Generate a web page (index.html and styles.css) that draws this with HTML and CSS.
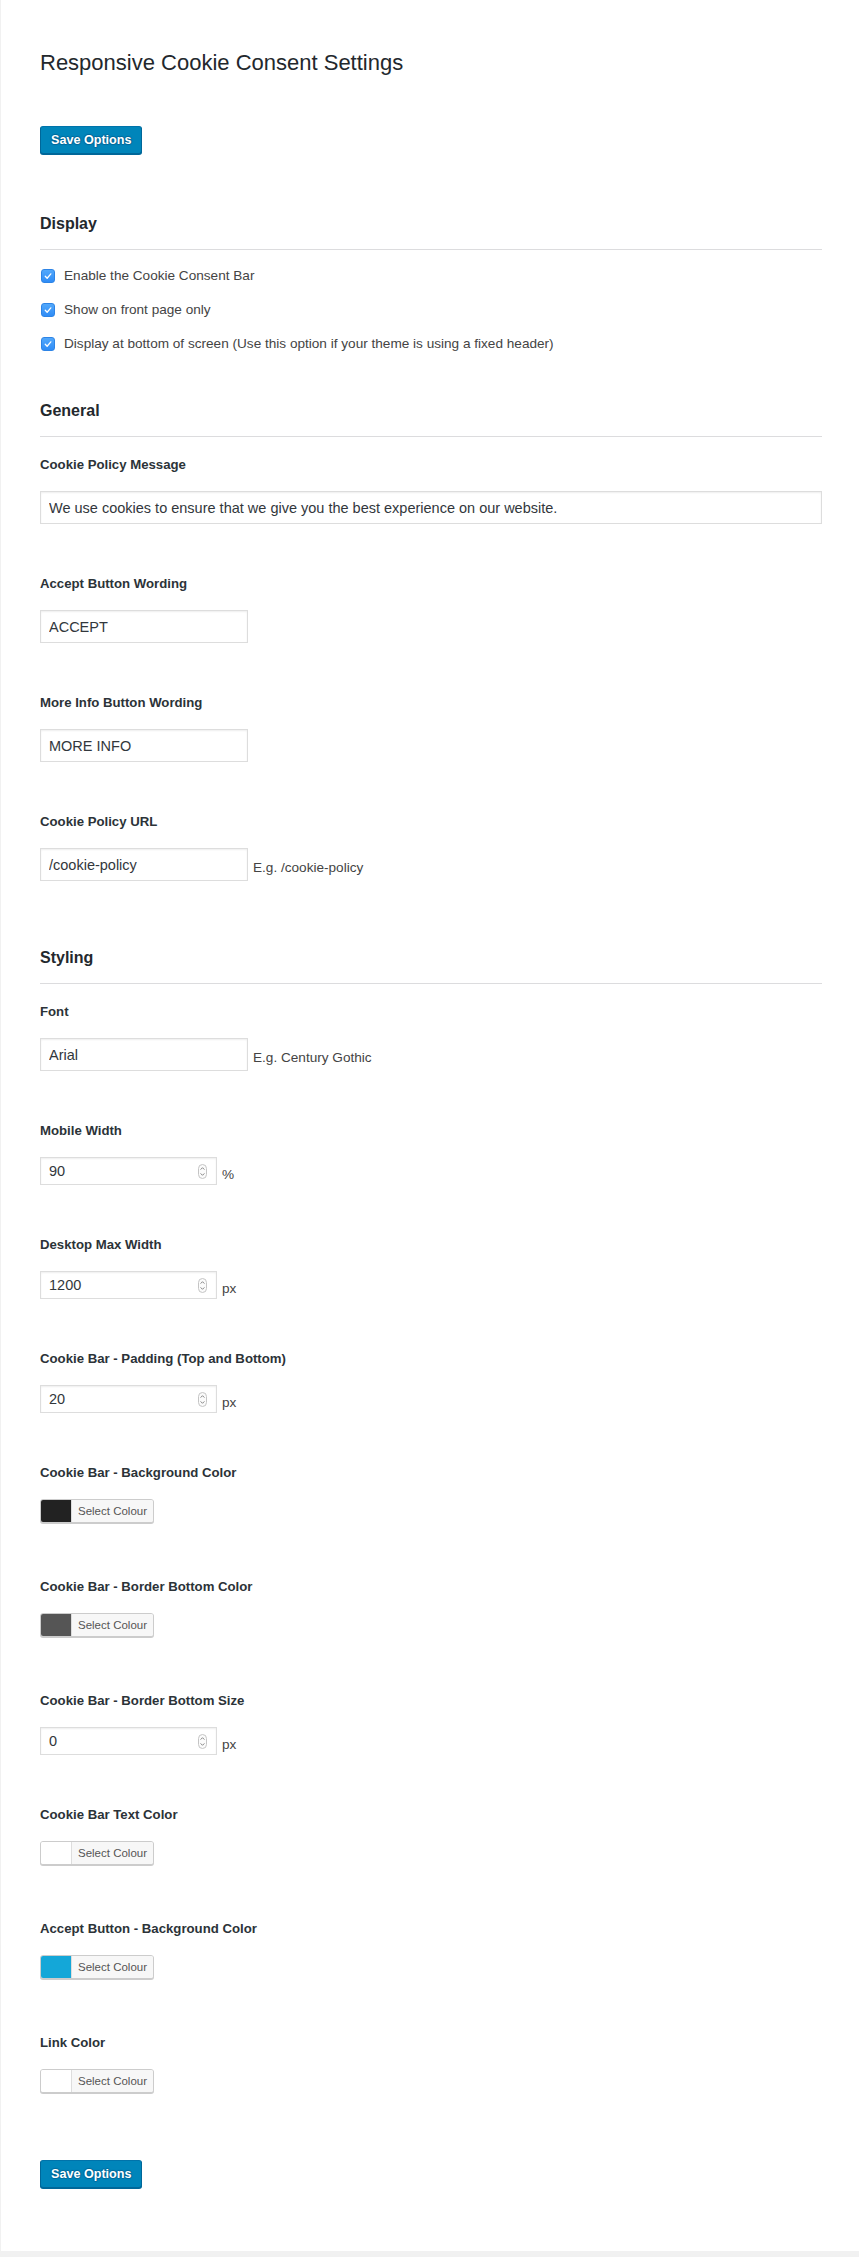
FILE: index.html
```html
<!DOCTYPE html>
<html lang="en">
<head>
<meta charset="UTF-8" />
<meta name="viewport" content="width=device-width, initial-scale=1" />
<title>Responsive Cookie Consent Settings</title>
<link rel="stylesheet" href="styles.css">
</head>
<body>

<div class="wrap">
  <h1>Responsive Cookie Consent Settings</h1>
  <button class="button-primary" type="submit">Save Options</button>

  <section class="section section-display">
    <h2>Display</h2>
    <div class="checks">
      <label class="check-row">
        <span class="check"><svg viewBox="0 0 14 14"><path d="M3.8 7.3l2.2 2.3 4.3-5.1"/></svg></span>
        Enable the Cookie Consent Bar
      </label>
      <label class="check-row">
        <span class="check"><svg viewBox="0 0 14 14"><path d="M3.8 7.3l2.2 2.3 4.3-5.1"/></svg></span>
        Show on front page only
      </label>
      <label class="check-row">
        <span class="check"><svg viewBox="0 0 14 14"><path d="M3.8 7.3l2.2 2.3 4.3-5.1"/></svg></span>
        Display at bottom of screen (Use this option if your theme is using a fixed header)
      </label>
    </div>
  </section>

  <section class="section">
    <h2>General</h2>
    <div class="fields">
      <div class="field">
        <label class="field-label" for="rcc-message">Cookie Policy Message</label>
        <input class="text-input wide" id="rcc-message" type="text" value="We use cookies to ensure that we give you the best experience on our website.">
      </div>
      <div class="field">
        <label class="field-label" for="rcc-accept">Accept Button Wording</label>
        <input class="text-input" id="rcc-accept" type="text" value="ACCEPT">
      </div>
      <div class="field">
        <label class="field-label" for="rcc-more">More Info Button Wording</label>
        <input class="text-input" id="rcc-more" type="text" value="MORE INFO">
      </div>
      <div class="field">
        <label class="field-label" for="rcc-url">Cookie Policy URL</label>
        <div class="inline">
          <input class="text-input" id="rcc-url" type="text" value="/cookie-policy">
          <span class="note">E.g. /cookie-policy</span>
        </div>
      </div>
    </div>
  </section>

  <section class="section">
    <h2>Styling</h2>
    <div class="fields">
      <div class="field">
        <label class="field-label" for="rcc-font">Font</label>
        <div class="inline">
          <input class="text-input" id="rcc-font" type="text" value="Arial">
          <span class="note">E.g. Century Gothic</span>
        </div>
      </div>

      <div class="field">
        <span class="field-label">Mobile Width</span>
        <div class="inline">
          <div class="num"><span class="num-value">90</span><svg class="spin" viewBox="0 0 9 15"><rect x="0.5" y="0.5" width="8" height="14" rx="4"/><path d="M2.6 5.6l1.9-1.9 1.9 1.9M2.6 9.4l1.9 1.9 1.9-1.9"/></svg></div>
          <span class="unit">%</span>
        </div>
      </div>

      <div class="field">
        <span class="field-label">Desktop Max Width</span>
        <div class="inline">
          <div class="num"><span class="num-value">1200</span><svg class="spin" viewBox="0 0 9 15"><rect x="0.5" y="0.5" width="8" height="14" rx="4"/><path d="M2.6 5.6l1.9-1.9 1.9 1.9M2.6 9.4l1.9 1.9 1.9-1.9"/></svg></div>
          <span class="unit">px</span>
        </div>
      </div>

      <div class="field">
        <span class="field-label">Cookie Bar - Padding (Top and Bottom)</span>
        <div class="inline">
          <div class="num"><span class="num-value">20</span><svg class="spin" viewBox="0 0 9 15"><rect x="0.5" y="0.5" width="8" height="14" rx="4"/><path d="M2.6 5.6l1.9-1.9 1.9 1.9M2.6 9.4l1.9 1.9 1.9-1.9"/></svg></div>
          <span class="unit">px</span>
        </div>
      </div>

      <div class="field field-color">
        <span class="field-label">Cookie Bar - Background Color</span>
        <button class="color-btn" type="button"><span class="swatch" style="background:#222222"></span><span class="color-text">Select Colour</span></button>
      </div>

      <div class="field field-color">
        <span class="field-label">Cookie Bar - Border Bottom Color</span>
        <button class="color-btn" type="button"><span class="swatch" style="background:#555555"></span><span class="color-text">Select Colour</span></button>
      </div>

      <div class="field">
        <span class="field-label">Cookie Bar - Border Bottom Size</span>
        <div class="inline">
          <div class="num"><span class="num-value">0</span><svg class="spin" viewBox="0 0 9 15"><rect x="0.5" y="0.5" width="8" height="14" rx="4"/><path d="M2.6 5.6l1.9-1.9 1.9 1.9M2.6 9.4l1.9 1.9 1.9-1.9"/></svg></div>
          <span class="unit">px</span>
        </div>
      </div>

      <div class="field field-color">
        <span class="field-label">Cookie Bar Text Color</span>
        <button class="color-btn" type="button"><span class="swatch" style="background:#ffffff"></span><span class="color-text">Select Colour</span></button>
      </div>

      <div class="field field-color">
        <span class="field-label">Accept Button - Background Color</span>
        <button class="color-btn" type="button"><span class="swatch" style="background:#14a7d8"></span><span class="color-text">Select Colour</span></button>
      </div>

      <div class="field field-color">
        <span class="field-label">Link Color</span>
        <button class="color-btn" type="button"><span class="swatch" style="background:#ffffff"></span><span class="color-text">Select Colour</span></button>
      </div>
    </div>
  </section>

  <button class="button-primary" type="submit">Save Options</button>
</div>

</body>
</html>
```

FILE: styles.css
```css
* {
  box-sizing: border-box;
}
body {
  margin: 0;
  background: #f1f1f1;
  font-family: "Liberation Sans", Arial, sans-serif;
  font-size: 13.6px;
  color: #444;
}

.wrap {
  margin-left: 1px;
  background: #fff;
  padding: 48px 37px 63px 39px;
}

h1 {
  margin: 0;
  font-size: 22px;
  font-weight: 400;
  line-height: 29px;
  color: #23282d;
}

/* primary button */
.button-primary {
  display: block;
  height: 28px;
  margin: 49px 0 0;
  padding: 0 10px 1px;
  font-family: inherit;
  font-size: 12.6px;
  font-weight: 700;
  color: #fff;
  background: #0085ba;
  border: 1px solid;
  border-color: #0073aa #006799 #006799;
  border-radius: 3px;
  box-shadow: 0 1px 0 #006799;
  text-shadow: 0 -1px 1px #006799, 1px 0 1px #006799, 0 1px 1px #006799, -1px 0 1px #006799;
  cursor: pointer;
}

/* sections */
.section {
  margin-bottom: 67px;
}
.section-display {
  margin-top: 60px;
  margin-bottom: 50px;
}
.section h2 {
  margin: 0;
  padding-bottom: 15px;
  font-size: 16px;
  font-weight: 700;
  line-height: 20px;
  color: #23282d;
  border-bottom: 1px solid #dcdcde;
}

/* checkboxes */
.checks {
  display: flex;
  flex-direction: column;
  gap: 20px;
  margin-top: 19px;
}
.check-row {
  display: flex;
  align-items: center;
  gap: 9px;
  height: 14px;
  line-height: 14px;
  padding-left: 1px;
}
.check {
  width: 14px;
  height: 14px;
  flex: none;
  border-radius: 3px;
  background: linear-gradient(#52a8fb, #2f8cf6);
  border: 1px solid #2d84e6;
}
.check svg {
  display: block;
  width: 12px;
  height: 12px;
  fill: none;
  stroke: #fff;
  stroke-width: 1.5;
  stroke-linecap: round;
  stroke-linejoin: round;
}

/* fields */
.fields {
  display: flex;
  flex-direction: column;
  gap: 50px;
  margin-top: 18px;
}
.field-label {
  display: block;
  margin-bottom: 16px;
  font-size: 13.2px;
  font-weight: 700;
  line-height: 20px;
  color: #2c3338;
}
.field-color .color-btn {
  margin-bottom: 4px;
}
.field-color:last-child .color-btn {
  margin-bottom: 0;
}

.text-input {
  display: block;
  width: 208px;
  height: 33px;
  margin: 0;
  padding: 0 8px;
  font-family: inherit;
  font-size: 14.5px;
  color: #32373c;
  background: #fff;
  border: 1px solid #ddd;
  box-shadow: inset 0 1px 2px rgba(0,0,0,0.07);
  outline: none;
}
.text-input.wide {
  width: 100%;
}

.inline {
  display: flex;
  align-items: center;
  gap: 5px;
}
.note {
  padding-top: 5px;
  color: #444;
}
.unit {
  padding-top: 6px;
  color: #444;
}

/* number box with stepper */
.num {
  display: flex;
  align-items: center;
  width: 177px;
  height: 28px;
  padding: 0 9px 0 8px;
  background: #fff;
  border: 1px solid #ddd;
  box-shadow: inset 0 1px 2px rgba(0,0,0,0.07);
}
.num-value {
  flex: 1;
  font-size: 14.5px;
  color: #32373c;
}
.spin {
  width: 9px;
  height: 15px;
}
.spin rect {
  fill: #fbfbfb;
  stroke: #c4c4c4;
}
.spin path {
  fill: none;
  stroke: #777;
  stroke-width: 0.9;
}

/* colour picker button */
.color-btn {
  display: flex;
  align-items: stretch;
  height: 24px;
  margin: 0;
  padding: 0;
  background: #f7f7f7;
  border: 1px solid #ccc;
  border-radius: 3px;
  box-shadow: 0 1px 0 #ccc;
  overflow: hidden;
  cursor: pointer;
}
.swatch {
  width: 30px;
}
.color-text {
  padding: 0 6px;
  font-family: inherit;
  font-size: 11.5px;
  line-height: 22px;
  color: #555;
  background: #f7f7f7;
  border-left: 1px solid #ddd;
}
```
